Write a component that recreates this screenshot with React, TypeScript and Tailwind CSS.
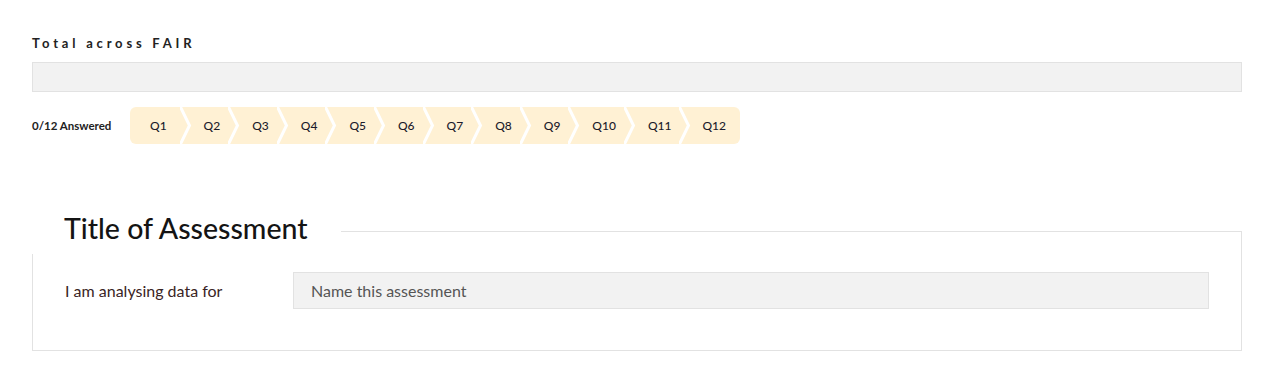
const questions = ["Q1", "Q2", "Q3", "Q4", "Q5", "Q6", "Q7", "Q8", "Q9", "Q10", "Q11", "Q12"];

function Chevron() {
  return (
    <svg width="12" height="37" viewBox="0 0 12 37" className="shrink-0 block">
      <polyline points="0,-1 9.5,18.5 0,38" fill="none" stroke="#ffffff" strokeWidth="3" />
    </svg>
  );
}

export default function App() {
  return (
    <div className="min-h-screen bg-white pl-8 pr-[23px] pt-[35px] text-[#1c1c24]" style={{ fontFamily: "Lato, 'Noto Sans', sans-serif" }}>
      <h3 className="text-[13px] font-bold tracking-[3.8px] leading-[17px] text-[#222]">Total across FAIR</h3>
      <div className="mt-[10px] h-[30px] w-full bg-[#f2f2f2] border border-[#e2e2e2]" />

      <div className="mt-[15px] flex items-center">
        <span className="w-[98px] text-[11.5px] font-bold text-[#222]">0/12 Answered</span>
        <div className="flex h-[37px] items-center rounded-[6px] bg-[#fff1d4] overflow-hidden">
          {questions.map((q, i) => (
            <div key={q} className="flex h-full items-center">
              <span
                className={`text-[12px] font-medium text-[#1b1b2b] ${i === 0 ? "pl-[20px] pr-[13px]" : i === questions.length - 1 ? "pl-[11px] pr-[14px]" : "pl-[12px] pr-[8px]"}`}
              >
                {q}
              </span>
              {i < questions.length - 1 && <Chevron />}
            </div>
          ))}
        </div>
      </div>

      <div className="mt-[87px] border border-[#e2e2e2]">
        <div className="-mt-[22px] -ml-px w-[309px] h-[44px] bg-white pl-[32px] pt-[2px]">
          <h2 className="text-[28.5px] font-medium leading-[32px] text-[#141414]">Title of Assessment</h2>
        </div>
        <div className="flex items-center pl-[32px] pr-[32px] pt-[18px] pb-[41px]">
          <label className="w-[228px] text-[16px] text-[#3a2424]">I am analysing data for</label>
          <div className="flex h-[37px] flex-1 items-center border border-[#e2e2e2] bg-[#f2f2f2] px-[17px] text-[16px] text-[#555]">
            Name this assessment
          </div>
        </div>
      </div>
    </div>
  );
}
